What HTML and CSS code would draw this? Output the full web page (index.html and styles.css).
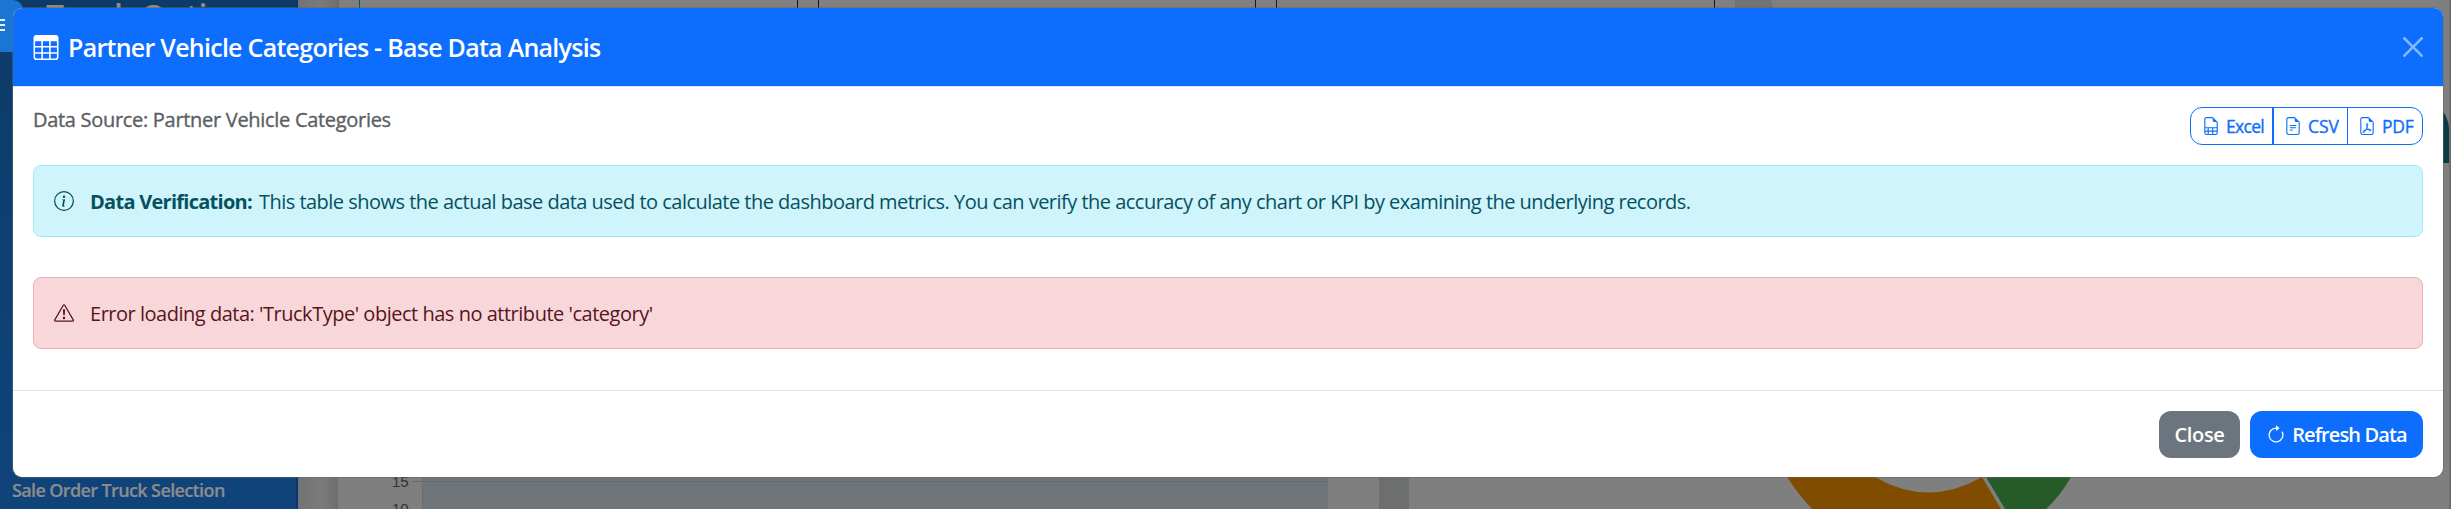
FILE: index.html
```html
<!DOCTYPE html>
<html lang="en">
<head>
<meta charset="utf-8">
<title>Partner Vehicle Categories</title>
<link rel="stylesheet" href="styles.css">
</head>
<body>
<div class="page">
  <aside class="sidebar">
    <div class="brand">Truck Opti</div>
    <div class="nav-item">Sale Order Truck Selection</div>
  </aside>
  <svg class="backdrop" width="2451" height="509" viewBox="0 0 2451 509">
    <defs>
      <linearGradient id="gutter"><stop offset="0" stop-color="#707374"/><stop offset=".6" stop-color="#7b7b7b"/><stop offset="1" stop-color="#6f6e6e"/></linearGradient>
    </defs>
    <rect x="298" width="2153" height="509" fill="#7f7f7f"/>
    <rect x="298" width="40" height="509" fill="url(#gutter)"/>
    <rect x="338" width="1" height="20" fill="#686868"/>
    <rect x="359" width="1" height="20" fill="#0b5560"/>
    <path d="M797.500 0v20M818.500 0v20M1255.500 0v20M1276.500 0v20M1714.500 0v20" stroke="#111820"/>
    <path d="M1735 0h36l4 20h-40z" fill="#717273"/>
    <rect x="422" y="470" width="906" height="39" fill="#6f7579"/>
    <path d="M412 481.500h916" stroke="#666b6f"/>
    <path d="M422.500 470v39" stroke="#696c6e"/>
    <rect x="1379" y="470" width="30" height="39" fill="#6d6f6e"/>
    <path d="M1787 477h88q53 31 107 0l19 32h-189q-14-15-25-32z" fill="#804d00"/>
    <path d="M1986 477h85q-10 18-25 32h-41z" fill="#265b28"/>
    <text x="392" y="487" class="tick">15</text>
    <text x="392" y="514" class="tick">10</text>
    <path d="M2449 0h2v509h-2z" fill="#6e6c6c"/>
    <path d="M2436 105q13 9 13 26v32h-13z" fill="#053d44"/>
  </svg>
  <div class="toggle"><i></i><i></i><i></i></div>

  <section class="modal">
    <header class="modal-header">
      <svg class="title-icon" viewBox="0 0 16 16" fill="currentColor"><path d="M0 2a2 2 0 0 1 2-2h12a2 2 0 0 1 2 2v12a2 2 0 0 1-2 2H2a2 2 0 0 1-2-2zm15 2h-4v3h4zm0 4h-4v3h4zm0 4h-4v3h3a1 1 0 0 0 1-1zm-5 3v-3H6v3zm-5 0v-3H1v2a1 1 0 0 0 1 1zm-4-4h4V8H1zm0-4h4V4H1zm5-3v3h4V4zm4 4H6v3h4z"/></svg>
      <h5 class="modal-title">Partner Vehicle Categories - Base Data Analysis</h5>
      <svg class="dismiss" viewBox="0 0 16 16" fill="#fff"><path d="M.293.293a1 1 0 0 1 1.414 0L8 6.586 14.293.293a1 1 0 1 1 1.414 1.414L9.414 8l6.293 6.293a1 1 0 0 1-1.414 1.414L8 9.414l-6.293 6.293a1 1 0 0 1-1.414-1.414L6.586 8 .293 1.707a1 1 0 0 1 0-1.414"/></svg>
    </header>
    <div class="modal-body">
      <div class="toolbar">
        <h6 class="source">Data Source: Partner Vehicle Categories</h6>
        <div class="exports">
          <button class="export excel"><svg viewBox="0 0 16 16" fill="currentColor"><path d="M14 14V4.500L9.500 0H4a2 2 0 0 0-2 2v12a2 2 0 0 0 2 2h8a2 2 0 0 0 2-2M9.500 3A1.500 1.500 0 0 0 11 4.500h2V9H3V2a1 1 0 0 1 1-1h5.500zM3 12v-2h2v2zm0 1h2v2H4a1 1 0 0 1-1-1zm3 2v-2h3v2zm4 0v-2h3v1a1 1 0 0 1-1 1zm3-3h-3v-2h3zm-7 0v-2h3v2z"/></svg><span>Excel</span></button>
          <button class="export csv"><svg viewBox="0 0 16 16" fill="currentColor"><path d="M5.500 7a.5.5 0 0 0 0 1h5a.5.5 0 0 0 0-1zM5 9.500a.5.5 0 0 1 .5-.5h5a.5.5 0 0 1 0 1h-5a.5.5 0 0 1-.5-.5m0 2a.5.5 0 0 1 .5-.5h2a.5.5 0 0 1 0 1h-2a.5.5 0 0 1-.5-.5"/><path d="M9.500 0H4a2 2 0 0 0-2 2v12a2 2 0 0 0 2 2h8a2 2 0 0 0 2-2V4.500zm0 1v2A1.500 1.500 0 0 0 11 4.500h2V14a1 1 0 0 1-1 1H4a1 1 0 0 1-1-1V2a1 1 0 0 1 1-1z"/></svg><span>CSV</span></button>
          <button class="export pdf"><svg viewBox="0 0 16 16" fill="currentColor"><path d="M14 14V4.500L9.500 0H4a2 2 0 0 0-2 2v12a2 2 0 0 0 2 2h8a2 2 0 0 0 2-2M9.500 3A1.500 1.500 0 0 0 11 4.500h2V14a1 1 0 0 1-1 1H4a1 1 0 0 1-1-1V2a1 1 0 0 1 1-1h5.500z"/><path d="M4.603 14.087a.8.8 0 0 1-.438-.42c-.195-.388-.13-.776.080-1.102.198-.307.526-.568.897-.787a7.700 7.700 0 0 1 1.482-.645 20 20 0 0 0 1.062-2.227 7.300 7.300 0 0 1-.43-1.295c-.086-.4-.119-.796-.046-1.136.075-.354.274-.672.650-.823.192-.077.400-.12.602-.077a.7.7 0 0 1 .477.365c.088.164.120.356.127.538.007.188-.012.396-.047.614-.084.510-.270 1.134-.520 1.794a11 11 0 0 0 .980 1.686 5.800 5.800 0 0 1 1.334.050c.364.066.734.195.960.465.120.144.193.320.200.518.007.192-.047.382-.138.563a1.040 1.040 0 0 1-.354.416.86.86 0 0 1-.510.138c-.331-.014-.654-.196-.933-.417a5.700 5.700 0 0 1-.911-.950 11.700 11.700 0 0 0-1.997.406 11.300 11.300 0 0 1-1.020 1.510c-.292.350-.609.656-.927.787a.8.8 0 0 1-.580.029m1.379-1.901q-.25.115-.459.238c-.328.194-.541.383-.647.547-.094.145-.096.250-.040.361q.016.032.026.044l.035-.012c.137-.056.355-.235.635-.572a8 8 0 0 0 .450-.606m1.640-1.330a13 13 0 0 1 1.010-.193 12 12 0 0 1-.510-.858 21 21 0 0 1-.500 1.050zm2.446.450q.226.245.435.410c.240.190.407.253.498.256a.1.1 0 0 0 .070-.015.3.3 0 0 0 .094-.125.440.440 0 0 0 .059-.200.1.1 0 0 0-.026-.063c-.052-.062-.200-.152-.518-.209a4 4 0 0 0-.612-.053zM8.078 7.800a7 7 0 0 0 .200-.828q.046-.282.038-.465a.6.6 0 0 0-.032-.198.5.5 0 0 0-.145.040c-.087.035-.158.106-.196.283-.040.192-.030.469.046.822q.036.167.090.346z"/></svg><span>PDF</span></button>
        </div>
      </div>
      <div class="alert info">
        <svg class="alert-icon" viewBox="0 0 16 16" fill="currentColor"><path d="M8 15A7 7 0 1 1 8 1a7 7 0 0 1 0 14m0 1A8 8 0 1 0 8 0a8 8 0 0 0 0 16"/><path d="m8.930 6.588-2.290.287-.082.380.450.083c.294.070.352.176.288.469l-.738 3.468c-.194.897.105 1.319.808 1.319.545 0 1.178-.252 1.465-.598l.088-.416c-.2.176-.492.246-.686.246-.275 0-.375-.193-.304-.533zM9 4.500a1 1 0 1 1-2 0 1 1 0 0 1 2 0"/></svg>
        <strong>Data Verification:</strong><span class="info-text">This table shows the actual base data used to calculate the dashboard metrics. You can verify the accuracy of any chart or KPI by examining the underlying records.</span>
      </div>
      <div class="alert danger">
        <svg class="alert-icon" viewBox="0 0 16 16" fill="currentColor"><path d="M7.938 2.016A.13.13 0 0 1 8.002 2a.13.13 0 0 1 .063.016.15.15 0 0 1 .054.057l6.857 11.667c.036.060.035.124.002.183a.2.2 0 0 1-.054.060.1.1 0 0 1-.066.017H1.146a.1.1 0 0 1-.066-.017.2.2 0 0 1-.054-.060.180.180 0 0 1 .002-.183L7.884 2.073a.15.15 0 0 1 .054-.057m1.044-.450a1.130 1.130 0 0 0-1.960 0L.165 13.233c-.457.778.091 1.767.980 1.767h13.713c.889 0 1.438-.990.980-1.767z"/><path d="M7.002 12a1 1 0 1 1 2 0 1 1 0 0 1-2 0M7.100 5.995a.905.905 0 1 1 1.800 0l-.350 3.507a.552.552 0 0 1-1.100 0z"/></svg>
        <span class="danger-text">Error loading data: 'TruckType' object has no attribute 'category'</span>
      </div>
    </div>
    <footer class="modal-footer">
      <button class="btn close"><span>Close</span></button>
      <button class="btn refresh"><svg viewBox="0 0 16 16" fill="currentColor"><path fill-rule="evenodd" d="M8 3a5 5 0 1 0 4.546 2.914.5.5 0 0 1 .908-.417A6 6 0 1 1 8 2z"/><path d="M8 4.466V.534a.25.25 0 0 1 .410-.192l2.360 1.966c.120.100.120.284 0 .384L8.410 4.658A.25.25 0 0 1 8 4.466"/></svg><span>Refresh Data</span></button>
    </footer>
  </section>
</div>
</body>
</html>
```
FILE: styles.css
```css
* { box-sizing: border-box; }
body { margin: 0; overflow: hidden; font-family: "Open Sans", "Noto Sans", sans-serif; font-size: 20px; }
.page { position: relative; width: 2451px; height: 509px; padding: 8px 8px 0 13px; overflow: hidden; background: #7f7f7f; }
.sidebar { position: absolute; left: 0; top: 0; width: 298px; height: 509px; background: linear-gradient(#0d3b68, #0f447b); border-right: 2px solid #0b3470; color: #8c8c8c; font-weight: 600; }
.brand { position: absolute; left: 46px; top: -4px; font-size: 32px; line-height: 40px; color: #948a84; white-space: nowrap; }
.nav-item { position: absolute; left: 12px; top: 478px; font-size: 18px; line-height: 25px; letter-spacing: -.62px; white-space: nowrap; -webkit-text-stroke: .2px; }
.backdrop { position: absolute; left: 0; top: 0; }
.tick { font: 15px "Liberation Sans", Arial, sans-serif; fill: #333; }
.toggle { position: absolute; left: 0; top: 0; width: 23px; height: 52px; padding-top: 19px; display: flex; flex-direction: column; gap: 3px; background: #1976d2; border-top-right-radius: 10px; }
.toggle i { width: 5px; height: 2px; background: #e6eef6; }

.modal { position: relative; width: 2430px; height: 469px; border-radius: 9px; background: #fff; overflow: hidden; box-shadow: 0 0 0 1px #67676780; }
.modal-header { display: flex; align-items: center; height: 79px; padding: 0 20px; background: #0d6efd; border-bottom: 1px solid #dee2e6; color: #fff; }
.title-icon { width: 26px; height: 25px; margin-right: 9px; }
.modal-title { margin: 0; font-size: 25px; font-weight: 600; line-height: 38px; letter-spacing: -.73px; white-space: nowrap; }
.dismiss { width: 20px; height: 20px; margin-left: auto; opacity: .5; }
.modal-body { padding: 20px; height: 303px; }
.toolbar { display: flex; justify-content: space-between; align-items: flex-start; height: 38px; margin-bottom: 20px; }
.source { margin: 0; font-size: 20px; font-weight: 500; line-height: 26px; letter-spacing: -.3px; color: #5b5e62; white-space: nowrap; -webkit-text-stroke: .35px; }
.exports { display: flex; width: 233px; height: 38px; border: 1px solid #0d6efd; border-radius: 12px; }
.export { display: flex; align-items: center; gap: 6px; padding: 0 0 0 10px; border: 0; background: none; color: #0d6efd; font: 500 17.500px "Open Sans", sans-serif; white-space: nowrap; -webkit-text-stroke: .35px; }
.export svg { width: 18px; height: 18px; flex: none; }
.excel { width: 83px; padding-left: 11px; border-right: 2px solid #0d6efd; letter-spacing: -.7px; }
.csv { width: 74px; border-right: 1px solid #0d6efd; }
.pdf { width: 74px; letter-spacing: -.3px; }
.alert { display: flex; align-items: center; height: 72px; padding: 0 20px; border: 1px solid; border-radius: 8px; white-space: nowrap; }
.alert-icon { width: 20px; height: 20px; flex: none; margin-right: 16px; }
.alert strong { margin-right: 7px; letter-spacing: -.73px; }
.info-text { letter-spacing: -.52px; }
.danger-text { letter-spacing: -.48px; }
.info { background: #cff4fc; border-color: #9eeaf9; color: #055160; margin-bottom: 40px; }
.danger { background: #f8d7da; border-color: #f1aeb5; color: #58151c; }
.modal-footer { display: flex; justify-content: flex-end; gap: 10px; height: 87px; padding: 20px 20px 19px; border-top: 1px solid #dee2e6; }
.btn { display: flex; align-items: center; justify-content: center; gap: 6px; height: 47px; padding: 0; border: 0; border-radius: 12px; color: #fff; font: 600 20px "Open Sans", sans-serif; white-space: nowrap; }
.btn svg { width: 20px; height: 20px; }
.close { width: 81px; background: #6c757d; letter-spacing: -.3px; }
.refresh { width: 173px; background: #0d6efd; letter-spacing: -.88px; }
```
